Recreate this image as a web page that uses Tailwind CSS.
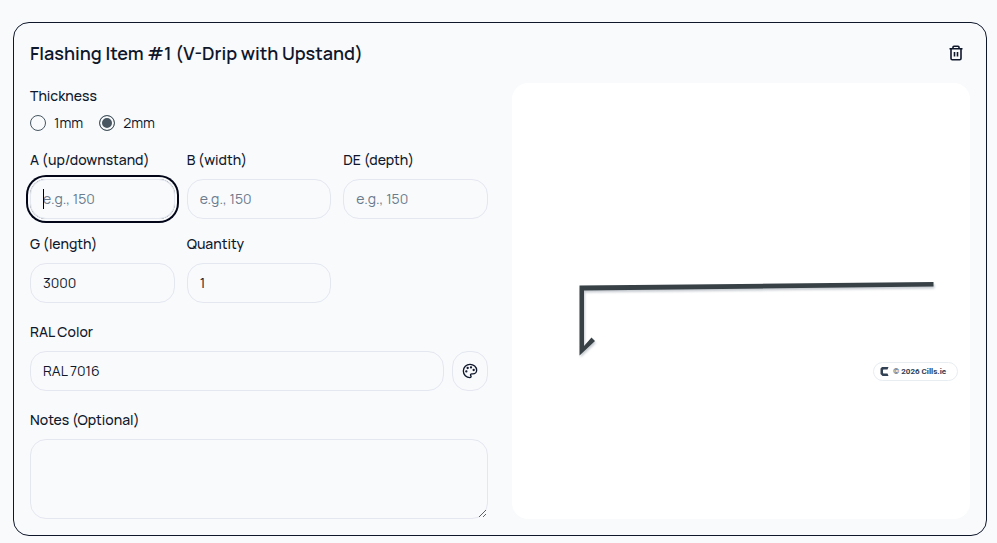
<!DOCTYPE html>
<html lang="en">
<head>
    <meta charset="UTF-8">
    <meta name="viewport" content="width=device-width, initial-scale=1.0">
    <title>Flashing Item</title>
    <script src="https://cdn.jsdelivr.net/npm/@tailwindcss/browser@4"></script>
</head>
<body class="bg-slate-50 text-slate-900 text-sm font-['Manrope','Inter',sans-serif]">
    <main class="pt-[22px] pl-[13px] pr-[10px] pb-[7px]">
        <section class="border border-slate-900 rounded-2xl p-4">
            <!-- Item header -->
            <div class="flex items-center justify-between mb-4">
                <h2 class="text-lg leading-7 font-semibold">Flashing Item #1 (V-Drip with Upstand)</h2>
                <button type="button" aria-label="Remove item" class="size-7 flex items-center justify-center rounded-full">
                    <svg class="size-4" viewBox="0 0 16 16" fill="none" stroke="currentColor" stroke-width="1.6">
                        <path d="M1.5 3.75h13M5 3.5V2.2Q5 1.25 6 1.25h4q1 0 1 .95v1.3M3 4v9.5q0 1.25 1.25 1.25h7.5q1.25 0 1.25-1.25V4M6.5 7v4.5M9.5 7v4.5"/>
                    </svg>
                </button>
            </div>

            <div class="grid grid-cols-2 gap-6">
                <!-- Form -->
                <form class="flex flex-col gap-4">
                    <fieldset>
                        <legend class="leading-[26px] font-medium mb-1.5">Thickness</legend>
                        <div class="flex gap-4 h-4">
                            <label class="flex items-center gap-2">
                                <input type="radio" name="thickness" value="1" class="appearance-none size-4 rounded-full border border-[#475660] checked:bg-[#475660] checked:shadow-[inset_0_0_0_2px_#f8fafc]">
                                1mm
                            </label>
                            <label class="flex items-center gap-2">
                                <input type="radio" name="thickness" value="2" checked class="appearance-none size-4 rounded-full border border-[#475660] checked:bg-[#475660] checked:shadow-[inset_0_0_0_2px_#f8fafc]">
                                2mm
                            </label>
                        </div>
                    </fieldset>

                    <div class="grid grid-cols-3 gap-3">
                        <div class="flex flex-col gap-1.5">
                            <label for="a" class="leading-[26px] font-medium">A (up/downstand)</label>
                            <div class="relative">
                                <input id="a" type="text" placeholder="e.g., 150" autofocus class="peer block w-full h-10 px-3 pb-0.5 rounded-2xl border border-[#e4e7f0] placeholder:text-[#6b7a8c] caret-transparent outline-none focus:ring-2 focus:ring-slate-950 focus:ring-offset-2 focus:ring-offset-slate-50">
                                <!-- Steady caret while the field is empty -->
                                <span class="hidden peer-focus:peer-placeholder-shown:block absolute left-[13px] inset-y-2.5 w-px bg-black pointer-events-none"></span>
                            </div>
                        </div>
                        <div class="flex flex-col gap-1.5">
                            <label for="b" class="leading-[26px] font-medium">B (width)</label>
                            <input id="b" type="text" placeholder="e.g., 150" class="w-full h-10 px-3 pb-0.5 rounded-2xl border border-[#e4e7f0] placeholder:text-[#6b7a8c] outline-none focus:ring-2 focus:ring-slate-950 focus:ring-offset-2 focus:ring-offset-slate-50">
                        </div>
                        <div class="flex flex-col gap-1.5">
                            <label for="de" class="leading-[26px] font-medium">DE (depth)</label>
                            <input id="de" type="text" placeholder="e.g., 150" class="w-full h-10 px-3 pb-0.5 rounded-2xl border border-[#e4e7f0] placeholder:text-[#6b7a8c] outline-none focus:ring-2 focus:ring-slate-950 focus:ring-offset-2 focus:ring-offset-slate-50">
                        </div>
                        <div class="flex flex-col gap-1.5">
                            <label for="g" class="leading-[26px] font-medium">G (length)</label>
                            <input id="g" type="text" value="3000" class="w-full h-10 px-3 pb-0.5 rounded-2xl border border-[#e4e7f0] outline-none focus:ring-2 focus:ring-slate-950 focus:ring-offset-2 focus:ring-offset-slate-50">
                        </div>
                        <div class="flex flex-col gap-1.5">
                            <label for="qty" class="leading-[26px] font-medium">Quantity</label>
                            <input id="qty" type="text" value="1" class="w-full h-10 px-3 pb-0.5 rounded-2xl border border-[#e4e7f0] outline-none focus:ring-2 focus:ring-slate-950 focus:ring-offset-2 focus:ring-offset-slate-50">
                        </div>
                    </div>

                    <div class="flex flex-col gap-1.5">
                        <label for="ral" class="leading-[26px] font-medium">RAL Color</label>
                        <div class="flex gap-2">
                            <input id="ral" type="text" value="RAL 7016" class="flex-1 min-w-0 h-10 px-3 pb-0.5 rounded-2xl border border-[#e4e7f0] outline-none focus:ring-2 focus:ring-slate-950 focus:ring-offset-2 focus:ring-offset-slate-50">
                            <button type="button" aria-label="Pick colour" class="w-9 h-10 flex items-center justify-center rounded-2xl border border-[#e4e7f0]">
                                <svg class="size-4" viewBox="0 0 24 24" fill="none" stroke="currentColor" stroke-width="2" stroke-linecap="round" stroke-linejoin="round">
                                    <circle cx="13.5" cy="6.5" r=".75" fill="currentColor"/>
                                    <circle cx="17.5" cy="10.5" r=".75" fill="currentColor"/>
                                    <circle cx="8.5" cy="7.5" r=".75" fill="currentColor"/>
                                    <circle cx="6.5" cy="12.5" r=".75" fill="currentColor"/>
                                    <path d="M12 2C6.5 2 2 6.5 2 12s4.5 10 10 10c.926 0 1.648-.746 1.648-1.688 0-.437-.18-.835-.437-1.125-.29-.289-.438-.652-.438-1.125a1.64 1.64 0 0 1 1.668-1.668h1.996c3.051 0 5.555-2.503 5.555-5.554C21.965 6.012 17.461 2 12 2z"/>
                                </svg>
                            </button>
                        </div>
                    </div>

                    <div class="flex flex-col gap-1.5">
                        <label for="notes" class="leading-[26px] font-medium">Notes (Optional)</label>
                        <textarea id="notes" class="w-full h-20 px-3 py-2 rounded-2xl border border-[#e4e7f0] resize-y outline-none focus:ring-2 focus:ring-slate-950"></textarea>
                    </div>
                </form>

                <!-- Profile preview -->
                <div class="relative bg-white rounded-2xl overflow-hidden">
                    <svg class="absolute inset-0 w-full h-full" viewBox="0 0 458 436" fill="none" role="img" aria-label="V-Drip with Upstand profile">
                        <g class="drop-shadow-[1px_2px_1px_rgba(71,85,105,0.3)]">
                            <path d="M67.5 202.5L421.5 199V203.5L72 207.5V263L79.5 254.5L83 258L67.5 272.5Z" fill="#374146"/>
                        </g>
                    </svg>
                    <div class="absolute right-3 bottom-[138px] w-[85px] h-[19px] flex items-center gap-1 pl-1.5 rounded-full border border-[#e8edf1] bg-white text-slate-700 text-[8px] leading-none font-bold font-['Roboto',sans-serif] whitespace-nowrap">
                        <svg class="size-[9px]" viewBox="0 0 9 9" fill="#334155">
                            <path d="M2 0H8.5L7.5 2.5H3.5L3 3V6L3.5 6.5H7.5L8.5 9H2.5L.5 7V1.5Z"/>
                        </svg>
                        <span>© 2026 Cills.ie</span>
                    </div>
                </div>
            </div>
        </section>
    </main>
</body>
</html>
